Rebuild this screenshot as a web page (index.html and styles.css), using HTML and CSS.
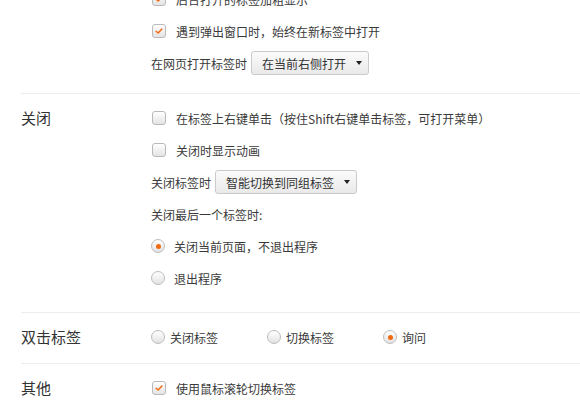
FILE: index.html
```html
<!DOCTYPE html>
<html lang="zh-CN">
<head>
  <meta charset="UTF-8">
  <title>标签设置</title>
  <link rel="stylesheet" href="styles.css">
</head>
<body>

<div class="settings">

  <!-- 打开 (scrolled, title out of view) -->
  <div class="sec sec-open">
    <div class="sec-title"></div>
    <div class="sec-body">
      <div class="row">
        <span class="box on"><svg viewBox="0 0 14 14"><polyline points="3.6,7.2 6,9.4 10.4,4.6"/></svg></span>
        后台打开的标签加粗显示
      </div>
      <div class="row">
        <span class="box on"><svg viewBox="0 0 14 14"><polyline points="3.6,7.2 6,9.4 10.4,4.6"/></svg></span>
        遇到弹出窗口时，始终在新标签中打开
      </div>
      <div class="row">
        <span class="pre">在网页打开标签时</span>
        <span class="select">在当前右侧打开<i class="caret"></i></span>
      </div>
    </div>
  </div>

  <!-- 关闭 -->
  <div class="sec sec-close">
    <div class="sec-title">关闭</div>
    <div class="sec-body">
      <div class="row">
        <span class="box"></span>
        在标签上右键单击（按住Shift右键单击标签，可打开菜单）
      </div>
      <div class="row">
        <span class="box"></span>
        关闭时显示动画
      </div>
      <div class="row">
        <span class="pre">关闭标签时</span>
        <span class="select">智能切换到同组标签<i class="caret"></i></span>
      </div>
      <div class="row">关闭最后一个标签时:</div>
      <div class="row">
        <span class="radio on"></span>
        关闭当前页面，不退出程序
      </div>
      <div class="row">
        <span class="radio"></span>
        退出程序
      </div>
    </div>
  </div>

  <!-- 双击标签 -->
  <div class="sec">
    <div class="sec-title">双击标签</div>
    <div class="sec-body">
      <div class="row">
        <span class="opt"><span class="radio tight"></span>关闭标签</span>
        <span class="opt"><span class="radio tight"></span>切换标签</span>
        <span class="opt"><span class="radio tight on"></span>询问</span>
      </div>
    </div>
  </div>

  <!-- 其他 -->
  <div class="sec sec-last">
    <div class="sec-title">其他</div>
    <div class="sec-body">
      <div class="row">
        <span class="box on"><svg viewBox="0 0 14 14"><polyline points="3.6,7.2 6,9.4 10.4,4.6"/></svg></span>
        使用鼠标滚轮切换标签
      </div>
    </div>
  </div>

</div>

</body>
</html>
```

FILE: styles.css
```css
body {
  margin: 0;
  background: #fff;
  font-family: "Noto Sans CJK SC", "Noto Sans", sans-serif;
  color: #3a3a3a;
  overflow: hidden;
}

.settings {
  margin-top: -25px;
}

.sec {
  display: flex;
  margin-left: 21px;
  padding: 8px 0 10px;
  border-bottom: 1px solid #ededed;
}
.sec-open  { padding-bottom: 14px; }
.sec-close { padding-bottom: 18px; }
.sec-last  { border-bottom: none; }

.sec-title {
  width: 130px;
  flex: none;
  font-size: 15px;
  line-height: 32px;
  color: #333;
}

.sec-body {
  flex: 1;
  font-size: 12px;
}

.row {
  display: flex;
  align-items: center;
  height: 32px;
  white-space: nowrap;
}

/* checkbox */
.box {
  width: 12px;
  height: 12px;
  margin: 0 10px 0 1px;
  border: 1px solid #b9b9b9;
  border-radius: 3px;
  background: linear-gradient(#ffffff, #e4e4e4);
  box-shadow: inset 0 1px 0 #fff;
  flex: none;
}
.box svg {
  display: block;
  width: 12px;
  height: 12px;
}
.box polyline {
  fill: none;
  stroke: #f26a10;
  stroke-width: 1.7;
  stroke-linecap: round;
  stroke-linejoin: round;
}

/* radio */
.radio {
  position: relative;
  width: 12px;
  height: 12px;
  margin-right: 9px;
  border: 1px solid #bcbcbc;
  border-radius: 50%;
  background: linear-gradient(#ffffff, #e2e2e2);
  flex: none;
}
.radio.tight { margin-right: 5px; }
.radio.on::after {
  content: "";
  position: absolute;
  left: 3.5px;
  top: 3.5px;
  width: 5px;
  height: 5px;
  border-radius: 50%;
  background: #f26a10;
}

.opt {
  display: flex;
  align-items: center;
  width: 116px;
}

/* dropdown */
.pre { margin-right: 4px; }
.select {
  display: flex;
  align-items: center;
  box-sizing: border-box;
  height: 24px;
  padding: 0 6px 0 10px;
  border: 1px solid #cacaca;
  border-radius: 3px;
  background: linear-gradient(#fbfbfb, #e9e9e9);
  color: #333;
}
.caret {
  width: 0;
  height: 0;
  margin-left: 10px;
  border-left: 3.5px solid transparent;
  border-right: 3.5px solid transparent;
  border-top: 4px solid #222;
}
```
